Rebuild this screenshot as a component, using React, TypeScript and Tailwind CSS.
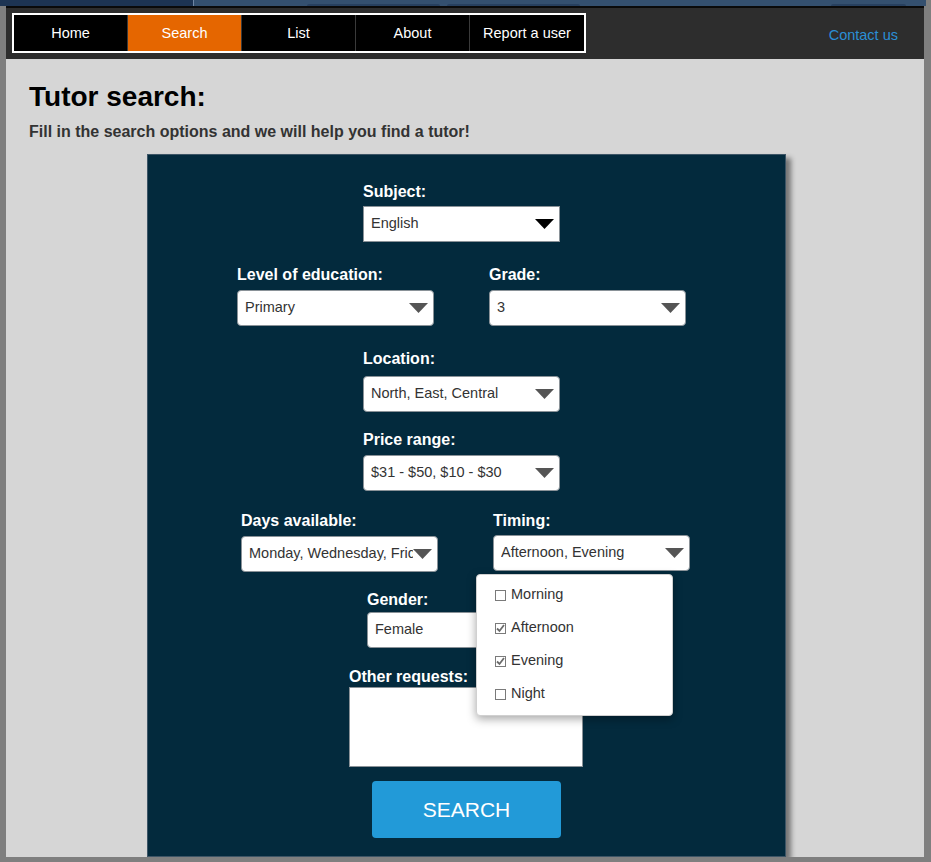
import React from 'react';

const font = { fontFamily: '"Liberation Sans", Arial, sans-serif' };

type SelectProps = {
  value: string;
  width?: string;
  square?: boolean;
  dark?: boolean;
};

const Arrow: React.FC<{ dark?: boolean }> = ({ dark }) => (
  <svg width="19" height="10" viewBox="0 0 19 10" className="shrink-0">
    <polygon points="0,0 19,0 9.5,10" fill={dark ? '#000000' : '#555555'} />
  </svg>
);

const FakeSelect: React.FC<SelectProps> = ({ value, width = 'w-[197px]', square, dark }) => (
  <div
    className={`${width} h-[36px] bg-white border border-[#8a9298] ${square ? '' : 'rounded-[4px]'} flex items-center pl-[7px] pr-[5px]`}
  >
    <span className="flex-1 overflow-hidden whitespace-nowrap text-[14.5px] text-[#333]">{value}</span>
    <Arrow dark={dark} />
  </div>
);

const Label: React.FC<{ children: React.ReactNode }> = ({ children }) => (
  <div className="text-[16px] leading-[18px] font-bold text-white">{children}</div>
);

const Check: React.FC<{ on?: boolean }> = ({ on }) => (
  <span className="w-[11px] h-[11px] border border-[#7a7a7a] bg-white flex items-center justify-center shrink-0">
    {on && (
      <svg width="9" height="9" viewBox="0 0 9 9">
        <path d="M1 4.5 L3.5 7 L8 1" stroke="#6b6b6b" strokeWidth="1.8" fill="none" />
      </svg>
    )}
  </span>
);

const navItems = ['Home', 'Search', 'List', 'About', 'Report a user'];

export default function App() {
  return (
    <div className="h-[862px] w-full bg-[#7f7f7f] overflow-hidden flex flex-col" style={font}>
      {/* banner strip */}
      <div className="h-[6px] flex mr-[5px] shrink-0">
        <div className="w-[193px] bg-[#1d3453]" />
        <div className="w-[1px] bg-[#6f86a3]" />
        <div className="flex-1 bg-[#34506f] flex items-end">
          <div className="ml-[113px] w-[133px] h-[2px] bg-[#27405f] rounded-t" />
          <div className="ml-[7px] w-[133px] h-[2px] bg-[#27405f] rounded-t" />
          <div className="ml-auto mr-[20px] w-[75px] h-[2px] bg-[#27405f] rounded-t" />
        </div>
      </div>
      <div className="h-[2px] bg-[#0a0a0a] ml-[6px] mr-[7px] shrink-0" />

      <div className="flex-1 ml-[6px] mr-[7px] mb-[5px] flex flex-col bg-[#d6d6d6] overflow-hidden">
        {/* nav */}
        <div className="h-[51px] bg-[#2d2d2d] flex items-start justify-between shrink-0">
          <div className="mt-[5px] ml-[6px] border-2 border-white flex">
            {navItems.map((n) => (
              <div
                key={n}
                className={`w-[114px] h-[36px] pt-[1px] flex items-center justify-center text-[14.5px] text-white border-r border-[#3a3a3a] last:border-r-0 ${
                  n === 'Search' ? 'bg-[#e56600]' : 'bg-black'
                }`}
              >
                {n}
              </div>
            ))}
          </div>
          <div className="mt-[17px] mr-[26px] text-[14.5px] text-[#2b8fd5]">Contact us</div>
        </div>

        {/* heading */}
        <div className="pl-[23px] pt-[22px]">
          <h1 className="text-[28px] leading-[32px] font-bold text-black">Tutor search:</h1>
          <p className="mt-[10px] text-[16px] leading-[18px] font-bold text-[#333]">
            Fill in the search options and we will help you find a tutor!
          </p>
        </div>

        {/* panel */}
        <div className="ml-[141px] mt-[13px] w-[639px] flex-1 bg-[#032a3d] border border-[#3d5566] shadow-[5px_4px_5px_rgba(0,0,0,0.45)] flex flex-col items-start pt-[28px]">
          <div className="ml-[215px]">
            <Label>Subject:</Label>
            <div className="mt-[5px]">
              <FakeSelect value="English" square dark />
            </div>
          </div>

          <div className="ml-[89px] mt-[24px] flex gap-[55px]">
            <div>
              <Label>Level of education:</Label>
              <div className="mt-[6px]">
                <FakeSelect value="Primary" />
              </div>
            </div>
            <div>
              <Label>Grade:</Label>
              <div className="mt-[6px]">
                <FakeSelect value="3" />
              </div>
            </div>
          </div>

          <div className="ml-[215px] mt-[24px]">
            <Label>Location:</Label>
            <div className="mt-[8px]">
              <FakeSelect value="North, East, Central" />
            </div>
          </div>

          <div className="ml-[215px] mt-[19px]">
            <Label>Price range:</Label>
            <div className="mt-[6px]">
              <FakeSelect value="$31 - $50, $10 - $30" />
            </div>
          </div>

          <div className="ml-[93px] mt-[21px] flex gap-[55px]">
            <div>
              <Label>Days available:</Label>
              <div className="mt-[6px]">
                <FakeSelect value="Monday, Wednesday, Friday" />
              </div>
            </div>
            <div className="relative">
              <Label>Timing:</Label>
              <div className="mt-[5px]">
                <FakeSelect value="Afternoon, Evening" />
              </div>
              {/* open dropdown */}
              <div className="absolute z-10 left-[-17px] top-[62px] w-[197px] h-[142px] bg-white rounded-[4px] border border-[#d0d0d0] shadow-[0_3px_10px_rgba(0,0,0,0.35)] pt-[11px] pl-[18px] flex flex-col gap-[15px] text-[14.5px] text-[#333]">
                {[
                  ['Morning', false],
                  ['Afternoon', true],
                  ['Evening', true],
                  ['Night', false],
                ].map(([t, on]) => (
                  <div key={t as string} className="flex items-center gap-[5px] h-[18px]">
                    <Check on={on as boolean} />
                    <span>{t as string}</span>
                  </div>
                ))}
              </div>
            </div>
          </div>

          <div className="ml-[219px] mt-[19px]">
            <Label>Gender:</Label>
            <div className="mt-[3px]">
              <FakeSelect value="Female" />
            </div>
          </div>

          <div className="ml-[201px] mt-[20px]">
            <Label>Other requests:</Label>
            <div className="mt-[1px] w-[234px] h-[80px] bg-white border border-[#8a9298]" />
          </div>

          <button className="ml-[224px] mt-[14px] w-[189px] h-[57px] bg-[#229ad8] rounded-[4px] text-white text-[21px]">
            SEARCH
          </button>
        </div>
      </div>
    </div>
  );
}
